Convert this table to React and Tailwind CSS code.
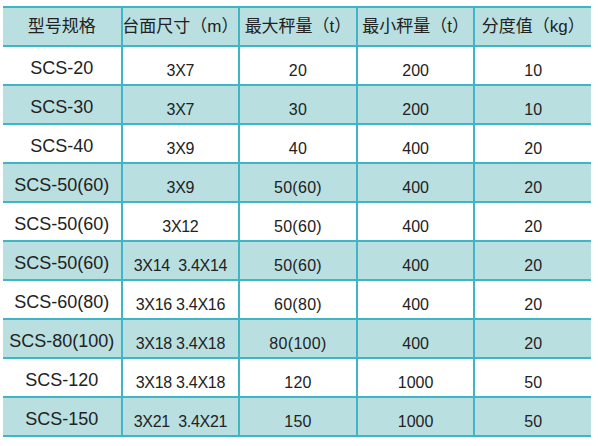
import React from 'react';

const headers = ['型号规格', '台面尺寸（m）', '最大秤量（t）', '最小秤量（t）', '分度值（kg）'];

const rows = [
  ['SCS-20', '3X7', '20', '200', '10'],
  ['SCS-30', '3X7', '30', '200', '10'],
  ['SCS-40', '3X9', '40', '400', '20'],
  ['SCS-50(60)', '3X9', '50(60)', '400', '20'],
  ['SCS-50(60)', '3X12', '50(60)', '400', '20'],
  ['SCS-50(60)', '3X14  3.4X14', '50(60)', '400', '20'],
  ['SCS-60(80)', '3X16 3.4X16', '60(80)', '400', '20'],
  ['SCS-80(100)', '3X18 3.4X18', '80(100)', '400', '20'],
  ['SCS-120', '3X18 3.4X18', '120', '1000', '50'],
  ['SCS-150', '3X21  3.4X21', '150', '1000', '50'],
];

// per-column text size and vertical nudge for the data rows
const cellText = [
  'text-[18px] pt-[6px]',
  'text-[16px] tracking-[-0.3px] pt-[10px]',
  'text-[16px] tracking-[0.3px] pt-[10px]',
  'text-[16px] pt-[10px]',
  'text-[16px] pt-[10px]',
];

const App = () => {
  return (
    <div className="w-[600px] h-[446px] bg-white pt-[6px] pl-[3px]" style={{ fontFamily: '"Liberation Sans", "Noto Sans CJK SC", sans-serif' }}>
      <div className="w-[588px] border-t-2 border-[#40b6c4] text-[#222]">
        <div className="grid grid-cols-5 h-[39px] bg-[#b9dfe0] border-b-2 border-[#40b6c4]">
          {headers.map((h, i) => (
            <div
              key={i}
              className={`flex items-center justify-center text-[17px] pt-[1px] whitespace-nowrap ${i > 0 ? 'border-l-2 border-[#40b6c4]' : ''}`}
            >
              {h}
            </div>
          ))}
        </div>
        {rows.map((row, r) => (
          <div
            key={r}
            className={`grid grid-cols-5 h-[39px] border-b-2 border-[#40b6c4] ${r % 2 === 1 ? 'bg-[#b9dfe0]' : 'bg-white'}`}
          >
            {row.map((c, i) => (
              <div
                key={i}
                className={`flex items-center justify-center whitespace-pre ${cellText[i]} ${i > 0 ? 'border-l-2 border-[#40b6c4]' : ''}`}
              >
                {c}
              </div>
            ))}
          </div>
        ))}
      </div>
    </div>
  );
};

export default App;
